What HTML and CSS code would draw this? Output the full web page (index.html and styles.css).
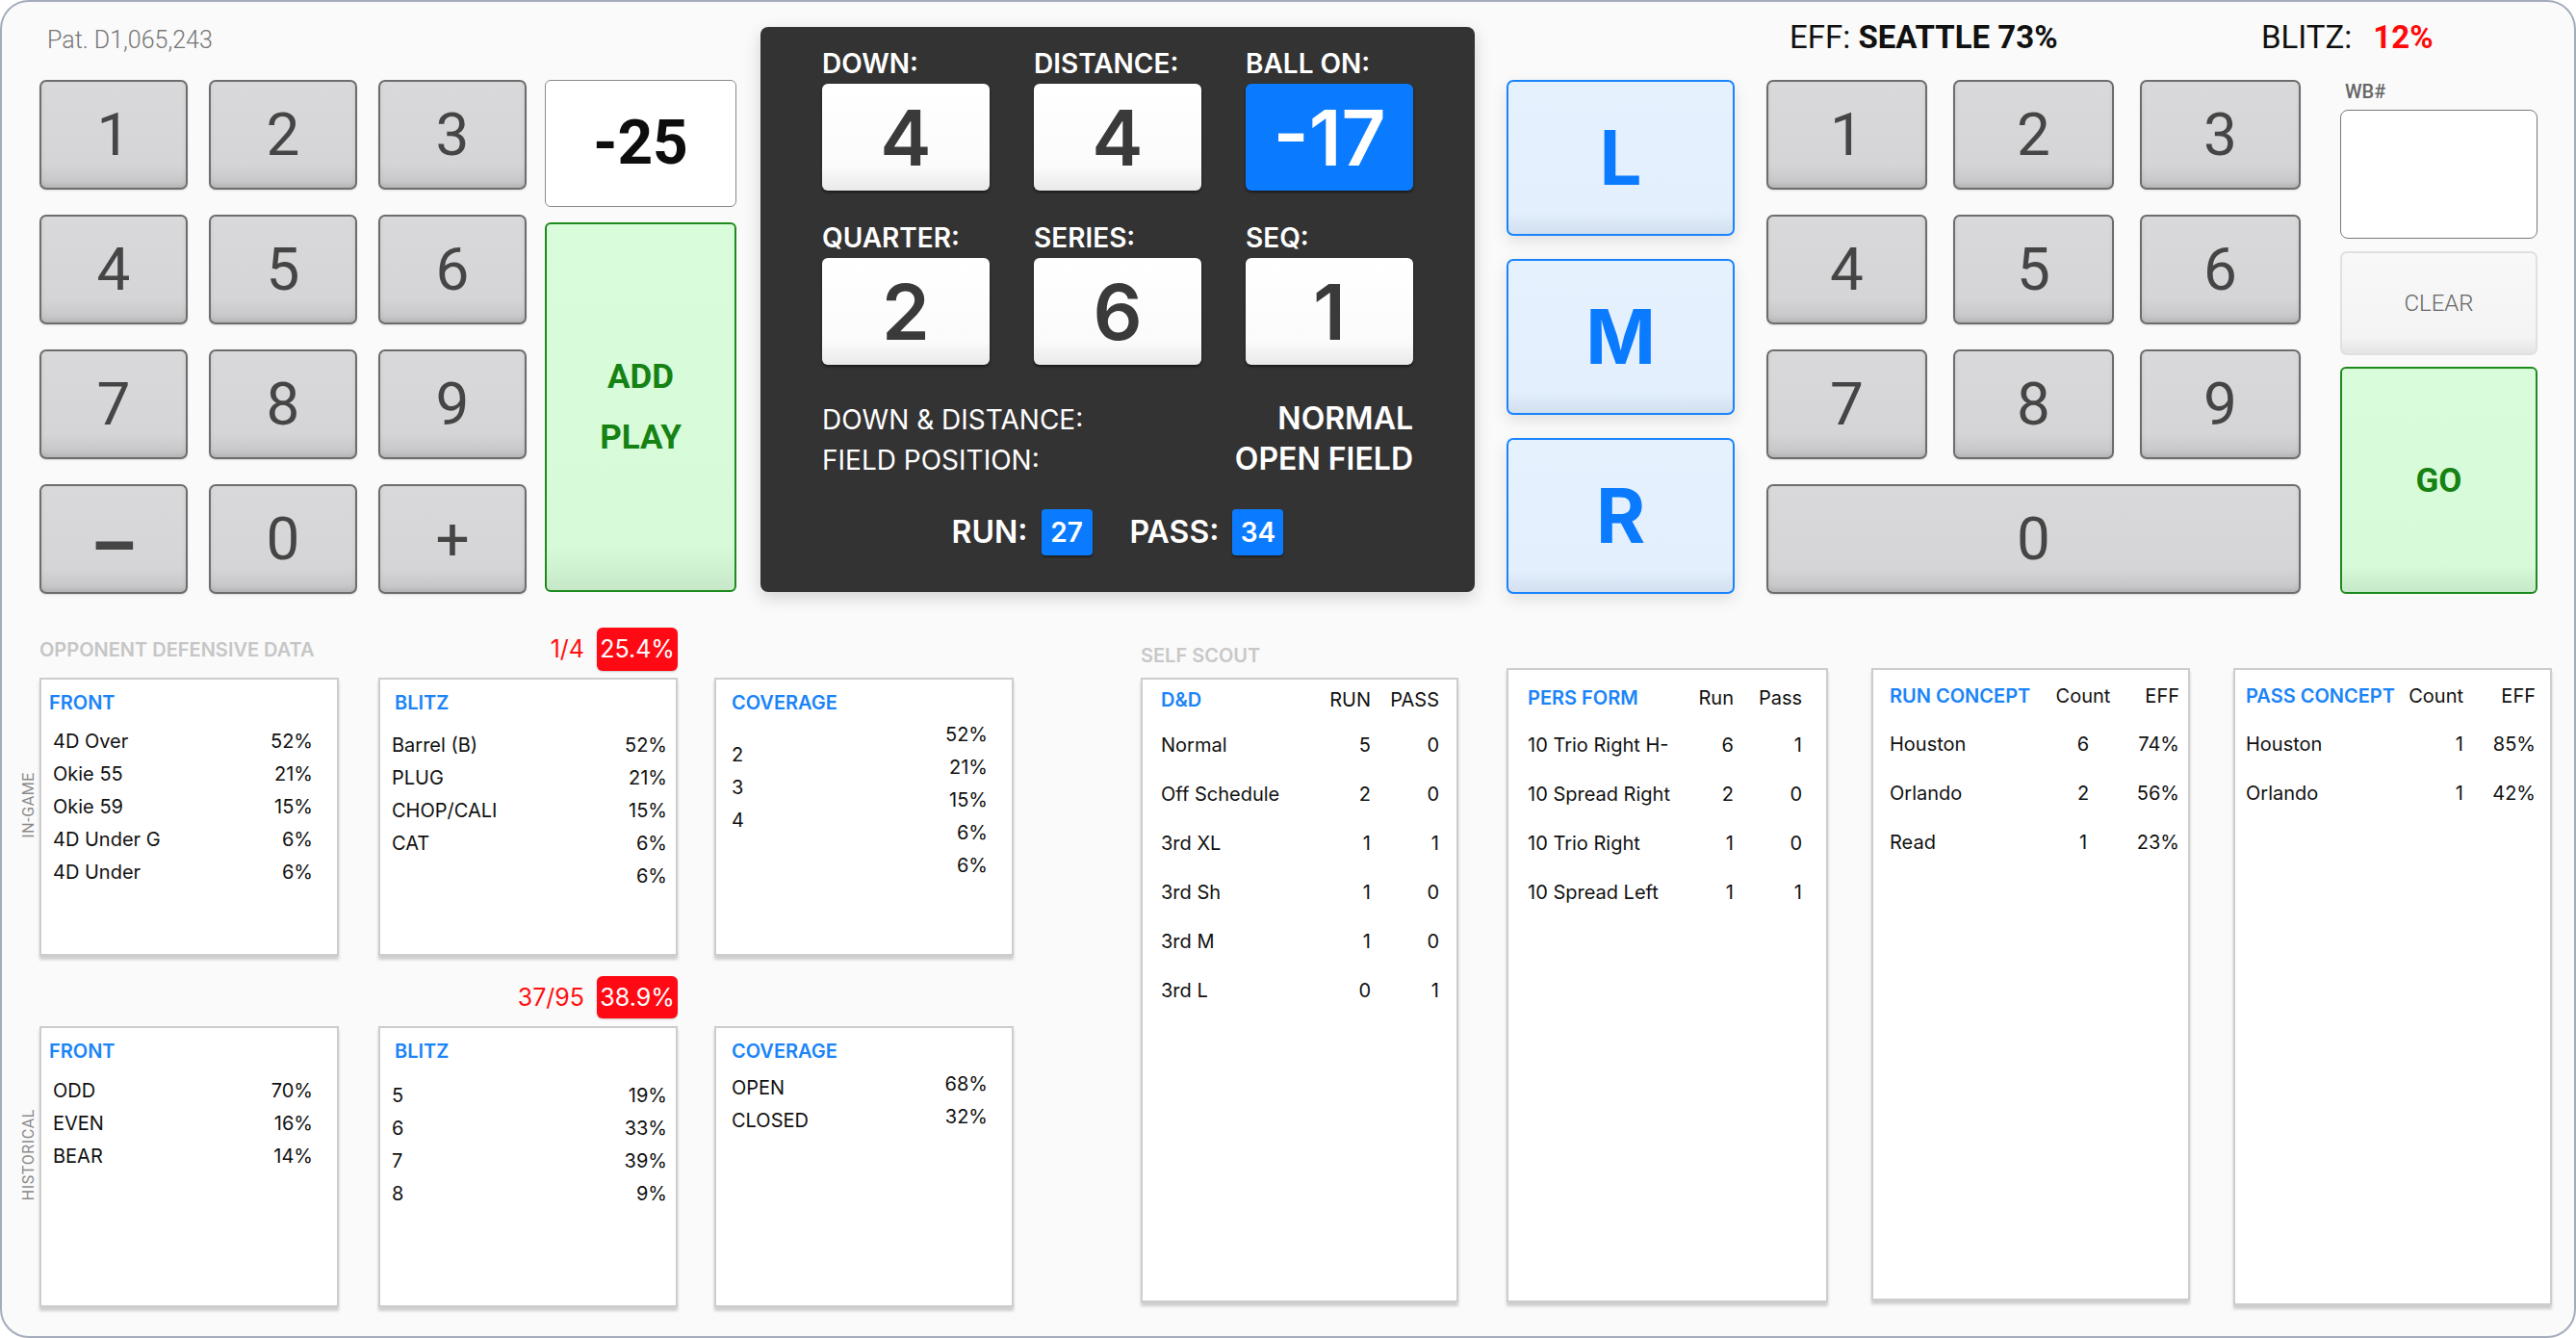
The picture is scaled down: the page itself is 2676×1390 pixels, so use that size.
FILE: index.html
```html
<!DOCTYPE html>
<html>
<head>
<meta charset="utf-8">
<title>Play Caller</title>
<link rel="stylesheet" href="styles.css">
</head>
<body>
<div class="frame">
  <div class="top">
    <div class="left">
      <div class="pat">Pat. D1,065,243</div>
      <div class="left-body">
        <div class="keypad kp-left">
          <div class="key">1</div><div class="key">2</div><div class="key">3</div>
          <div class="key">4</div><div class="key">5</div><div class="key">6</div>
          <div class="key">7</div><div class="key">8</div><div class="key">9</div>
          <div class="key key-minus">–</div><div class="key">0</div><div class="key">+</div>
        </div>
        <div class="entry">
          <div class="entry-val">-25</div>
          <div class="btn-green add">ADD<br>PLAY</div>
        </div>
      </div>
    </div>

    <div class="panel">
      <div class="pgrid">
        <div class="pcell"><div class="plabel">DOWN:</div><div class="pbox">4</div></div>
        <div class="pcell"><div class="plabel">DISTANCE:</div><div class="pbox">4</div></div>
        <div class="pcell"><div class="plabel">BALL ON:</div><div class="pbox blue">-17</div></div>
        <div class="pcell"><div class="plabel">QUARTER:</div><div class="pbox">2</div></div>
        <div class="pcell"><div class="plabel">SERIES:</div><div class="pbox">6</div></div>
        <div class="pcell"><div class="plabel">SEQ:</div><div class="pbox">1</div></div>
      </div>
      <div class="pinfo">
        <div class="prow"><span class="k">DOWN &amp; DISTANCE:</span><span class="v">NORMAL</span></div>
        <div class="prow"><span class="k">FIELD POSITION:</span><span class="v">OPEN FIELD</span></div>
      </div>
      <div class="prun">
        <span class="lab">RUN:</span><span class="pchip">27</span>
        <span class="lab lab2">PASS:</span><span class="pchip">34</span>
      </div>
    </div>

    <div class="right">
      <div class="rhead">
        <span class="eff">EFF: <b>SEATTLE 73%</b></span>
        <span class="blitz">BLITZ:<span class="red">12%</span></span>
      </div>
      <div class="rbody">
        <div class="lmr">
          <div class="lmr-btn">L</div>
          <div class="lmr-btn">M</div>
          <div class="lmr-btn">R</div>
        </div>
        <div class="keypad kp-right">
          <div class="key">1</div><div class="key">2</div><div class="key">3</div>
          <div class="key">4</div><div class="key">5</div><div class="key">6</div>
          <div class="key">7</div><div class="key">8</div><div class="key">9</div>
          <div class="key key-wide">0</div>
        </div>
        <div class="side">
          <div class="wb-label">WB#</div>
          <div class="wb-input"></div>
          <div class="clear">CLEAR</div>
          <div class="btn-green go">GO</div>
        </div>
      </div>
    </div>
  </div>

  <div class="bottom">
    <div class="opp">
      <div class="opp-head">
        <span class="opp-title">OPPONENT DEFENSIVE DATA</span>
        <span class="ratio"><span class="frac">1/4</span><span class="badge">25.4%</span></span>
      </div>
      <div class="opp-row row1">
        <div class="gut"><span class="vlabel">IN-GAME</span></div>
        <div class="card front">
          <div class="chead">FRONT</div>
          <div class="cbody">
            <div class="cl o13">4D Over<br>Okie 55<br>Okie 59<br>4D Under G<br>4D Under</div>
            <div class="cr o13">52%<br>21%<br>15%<br>6%<br>6%</div>
          </div>
        </div>
        <div class="card blitz-card c2">
          <div class="chead">BLITZ</div>
          <div class="cbody">
            <div class="cl o17">Barrel (B)<br>PLUG<br>CHOP/CALI<br>CAT</div>
            <div class="cr o17">52%<br>21%<br>15%<br>6%<br>6%</div>
          </div>
        </div>
        <div class="card cov c3">
          <div class="chead">COVERAGE</div>
          <div class="cbody">
            <div class="cl o27">2<br>3<br>4</div>
            <div class="cr o6">52%<br>21%<br>15%<br>6%<br>6%</div>
          </div>
        </div>
      </div>
      <div class="opp-head head2">
        <span class="opp-title"></span>
        <span class="ratio"><span class="frac">37/95</span><span class="badge b2">38.9%</span></span>
      </div>
      <div class="opp-row row2">
        <div class="gut"><span class="vlabel">HISTORICAL</span></div>
        <div class="card front">
          <div class="chead">FRONT</div>
          <div class="cbody">
            <div class="cl o14">ODD<br>EVEN<br>BEAR</div>
            <div class="cr o14">70%<br>16%<br>14%</div>
          </div>
        </div>
        <div class="card blitz-card c2">
          <div class="chead">BLITZ</div>
          <div class="cbody">
            <div class="cl o19">5<br>6<br>7<br>8</div>
            <div class="cr o19">19%<br>33%<br>39%<br>9%</div>
          </div>
        </div>
        <div class="card cov c3">
          <div class="chead">COVERAGE</div>
          <div class="cbody">
            <div class="cl o11">OPEN<br>CLOSED</div>
            <div class="cr o7">68%<br>32%</div>
          </div>
        </div>
      </div>
    </div>

    <div class="self">
      <div class="dd-col">
        <div class="self-title">SELF SCOUT</div>
        <div class="scard dd">
          <div class="stab">
            <div class="th blue">D&amp;D</div><div class="th r">RUN</div><div class="th r">PASS</div>
            <div>Normal</div><div class="r">5</div><div class="r">0</div>
            <div>Off Schedule</div><div class="r">2</div><div class="r">0</div>
            <div>3rd XL</div><div class="r">1</div><div class="r">1</div>
            <div>3rd Sh</div><div class="r">1</div><div class="r">0</div>
            <div>3rd M</div><div class="r">1</div><div class="r">0</div>
            <div>3rd L</div><div class="r">0</div><div class="r">1</div>
          </div>
        </div>
      </div>
      <div class="scard pers">
        <div class="stab">
          <div class="th blue">PERS FORM</div><div class="th r">Run</div><div class="th r">Pass</div>
          <div>10 Trio Right H-</div><div class="r">6</div><div class="r">1</div>
          <div>10 Spread Right</div><div class="r">2</div><div class="r">0</div>
          <div>10 Trio Right</div><div class="r">1</div><div class="r">0</div>
          <div>10 Spread Left</div><div class="r">1</div><div class="r">1</div>
        </div>
      </div>
      <div class="scard runc">
        <div class="stab">
          <div class="th blue">RUN CONCEPT</div><div class="th c">Count</div><div class="th r">EFF</div>
          <div>Houston</div><div class="c">6</div><div class="r">74%</div>
          <div>Orlando</div><div class="c">2</div><div class="r">56%</div>
          <div>Read</div><div class="c">1</div><div class="r">23%</div>
        </div>
      </div>
      <div class="scard passc">
        <div class="stab">
          <div class="th blue">PASS CONCEPT</div><div class="th r">Count</div><div class="th r">EFF</div>
          <div>Houston</div><div class="r">1</div><div class="r">85%</div>
          <div>Orlando</div><div class="r">1</div><div class="r">42%</div>
        </div>
      </div>
    </div>
  </div>
</div>
</body>
</html>
```

FILE: styles.css
```css
* { box-sizing: border-box; }
html, body { margin: 0; padding: 0; background: #ffffff; }

.frame {
  width: 2676px;
  height: 1390px;
  border: 2px solid #a4acbc;
  border-radius: 30px;
  background: #fafafa;
  overflow: hidden;
  font-family: Roboto, "Liberation Sans", sans-serif;
}

/* ---------- TOP ---------- */
.top {
  display: flex;
  align-items: flex-start;
  height: 638px;
  padding-left: 39px;
  flex-shrink: 0;
}

.left { width: 724px; display: flex; flex-direction: column; }
.pat {
  height: 81px;
  padding: 27px 0 0 8px;
  font: 300 25px/25px Roboto, sans-serif;
  color: #767676;
}
.left-body { display: flex; }

.keypad {
  display: grid;
  grid-template-rows: repeat(4, 114px);
  row-gap: 26px;
}
.kp-left { grid-template-columns: repeat(3, 154px); column-gap: 22px; }
.kp-right { grid-template-columns: repeat(3, 167px); column-gap: 27px; margin-left: 33px; }

.key {
  background: linear-gradient(#d9d9db, #d5d5d7 78%, #c3c3c5);
  border: 2px solid #6d6d6d;
  border-radius: 7px;
  display: flex;
  align-items: center;
  justify-content: center;
  font: 400 62px/1 Roboto, sans-serif;
  color: #454545;
  box-shadow: inset 0 -3px 4px rgba(0,0,0,0.08), 0 1px 2px rgba(0,0,0,0.12);
}
.key-minus { font-size: 76px; font-weight: 700; padding-top: 14px; }
.key-wide { grid-column: 1 / 4; }

.entry { margin-left: 19px; width: 199px; display: flex; flex-direction: column; gap: 16px; }
.entry-val {
  height: 132px;
  background: #ffffff;
  border: 1.5px solid #8a8a8a;
  border-radius: 6px;
  display: flex;
  align-items: center;
  justify-content: center;
  font: 700 64px/1 Roboto, sans-serif;
  color: #0d0d0d;
}

.btn-green {
  background: linear-gradient(#d9fcdb, #d7fbd9 88%, #c6e8c8);
  border: 2px solid #1d8a1d;
  border-radius: 6px;
  display: flex;
  align-items: center;
  justify-content: center;
  text-align: center;
  font: 700 35px/63px Roboto, sans-serif;
  color: #168214;
}
.add { height: 384px; }

/* ---------- DARK PANEL ---------- */
.panel {
  margin: 26px 0 0 25px;
  width: 742px;
  height: 587px;
  flex-shrink: 0;
  background: #333333;
  border-radius: 8px;
  padding: 24px 64px 0;
  box-shadow: 0 6px 18px rgba(0,0,0,0.16);
  font-family: Inter, "Liberation Sans", sans-serif;
  color: #ffffff;
}
.pgrid {
  display: grid;
  grid-template-columns: repeat(3, 174px);
  column-gap: 46px;
  row-gap: 35px;
}
.plabel { font: 600 28px/28px Inter, sans-serif; margin-bottom: 7px; }
.pbox {
  height: 111px;
  background: linear-gradient(#ffffff, #fbfbfb 78%, #e9e9e9);
  border-radius: 6px;
  display: flex;
  align-items: center;
  justify-content: center;
  font: 600 80px/1 Inter, sans-serif;
  color: #3a3a3a;
  box-shadow: 0 2px 3px rgba(0,0,0,0.5);
}
.pbox.blue { background: #0a7bff; color: #ffffff; }

.pinfo { margin-top: 35px; }
.prow { display: flex; justify-content: space-between; align-items: baseline; height: 42px; }
.prow .k { font: 400 28px/42px Inter, sans-serif; }
.prow .v { font: 600 32px/42px Inter, sans-serif; }

.prun { display: flex; justify-content: center; align-items: center; margin-top: 31px; }
.prun .lab { font: 600 32px/1 Inter, sans-serif; }
.prun .lab2 { margin-left: 39px; }
.pchip {
  width: 53px;
  height: 48px;
  margin-left: 14px;
  background: #0a7bff;
  border-radius: 4px;
  font: 600 28px/48px Inter, sans-serif;
  text-align: center;
  box-shadow: 0 2px 2px rgba(0,0,0,0.4);
}

/* ---------- RIGHT ---------- */
.right { margin-left: 33px; display: flex; flex-direction: column; }
.rhead {
  height: 81px;
  padding: 20px 0 0 294px;
  display: flex;
  font: 400 33px/33px Roboto, sans-serif;
  color: #111111;
  white-space: nowrap;
}
.eff { width: 490px; }
.eff b { font-weight: 700; }
.blitz .red { color: #ff0a0a; font-weight: 700; margin-left: 22px; }

.rbody { display: flex; }
.lmr { width: 237px; display: flex; flex-direction: column; gap: 24px; }
.lmr-btn {
  height: 162px;
  background: linear-gradient(#e6f1fe, #e3effd 86%, #d2dfee);
  border: 2px solid #1a84ff;
  border-radius: 7px;
  display: flex;
  align-items: center;
  justify-content: center;
  font: 700 78px/1 Inter, sans-serif;
  color: #0a7bff;
  box-shadow: 0 6px 16px rgba(0,0,0,0.10);
}

.side { margin-left: 41px; width: 205px; display: flex; flex-direction: column; }
.wb-label { height: 31px; padding: 3px 0 0 5px; font: 500 20px/19px Roboto, sans-serif; color: #666666; }
.wb-input { height: 134px; background: #ffffff; border: 1.5px solid #7a7a7a; border-radius: 8px; }
.clear {
  margin-top: 13px;
  height: 108px;
  background: linear-gradient(#f8f8f8, #f4f4f4 84%, #e4e4e4);
  border: 2px solid #e0e0e0;
  border-radius: 7px;
  display: flex;
  align-items: center;
  justify-content: center;
  font: 300 24px/1 Roboto, sans-serif;
  color: #666666;
}
.go { margin-top: 12px; height: 236px; }

/* ---------- BOTTOM ---------- */
.bottom { display: flex; align-items: flex-start; }
.opp { width: 1052px; flex-shrink: 0; }

.opp-head {
  width: 702px;
  height: 64px;
  padding-top: 12px;
  display: flex;
  justify-content: space-between;
  align-items: flex-start;
}
.opp-head.head2 { height: 73px; padding-top: 21px; }
.opp-title {
  margin-left: 39px;
  margin-top: 13px;
  font: 600 20px/20px Inter, sans-serif;
  color: #c6c6c6;
}
.ratio { display: flex; align-items: center; }
.frac { font: 400 25px/1 Inter, sans-serif; color: #ff1010; margin-right: 13px; }
.badge {
  width: 84px;
  height: 45px;
  background: #ff0a14;
  border-radius: 6px;
  color: #ffffff;
  font: 400 25px/45px Inter, sans-serif;
  text-align: center;
  box-shadow: 0 1px 2px rgba(0,0,0,0.2);
}
.badge.b2 { height: 44px; line-height: 44px; }

.opp-row { display: flex; }
.opp-row.row1 { height: 289px; }
.opp-row.row2 { height: 292px; }
.gut {
  width: 39px;
  display: flex;
  align-items: center;
  justify-content: flex-end;
  padding-right: 3px;
  padding-bottom: 24px;
}
.vlabel {
  writing-mode: vertical-rl;
  transform: rotate(180deg);
  font: 400 16px/16px Roboto, sans-serif;
  letter-spacing: 0.6px;
  color: #8a8a8a;
}

.card {
  width: 311px;
  height: 100%;
  background: #ffffff;
  border: 2px solid #cdcdcd;
  box-shadow: 0 4px 3px rgba(0,0,0,0.18);
  padding-top: 14px;
  font-family: Inter, "Liberation Sans", sans-serif;
}
.card.c2 { margin-left: 41px; }
.card.c3 { margin-left: 38px; }
.chead { font: 600 20px/20px Inter, sans-serif; color: #1a84f8; }
.cbody { display: flex; justify-content: space-between; }
.cl, .cr { font: 400 20px/34px Inter, sans-serif; color: #111111; }
.cr { text-align: right; }

.front .chead { margin-left: 8px; }
.front .cl { margin-left: 12px; }
.front .cr { margin-right: 25px; }
.blitz-card .chead { margin-left: 15px; }
.blitz-card .cl { margin-left: 12px; }
.blitz-card .cr { margin-right: 9px; }
.cov .chead { margin-left: 16px; }
.cov .cl { margin-left: 16px; }
.cov .cr { margin-right: 25px; }

.o6 { padding-top: 6px; }
.o7 { padding-top: 7px; }
.o11 { padding-top: 11px; }
.o13 { padding-top: 13px; }
.o14 { padding-top: 14px; }
.o17 { padding-top: 17px; }
.o19 { padding-top: 19px; }
.o27 { padding-top: 27px; }

/* self scout */
.self { display: flex; align-items: flex-start; margin-left: 131px; }
.dd-col { width: 330px; display: flex; flex-direction: column; }
.self-title {
  height: 64px;
  padding-top: 31px;
  font: 600 20px/20px Inter, sans-serif;
  color: #c8c8c8;
}
.scard {
  background: #ffffff;
  border: 2px solid #cdcdcd;
  box-shadow: 0 4px 3px rgba(0,0,0,0.18);
  font-family: Inter, "Liberation Sans", sans-serif;
  color: #111111;
}
.stab { display: grid; font: 400 20px/51px Inter, sans-serif; white-space: nowrap; }
.stab .th { line-height: 20px; margin-bottom: 12px; }
.stab .blue { color: #1a84f8; font-weight: 600; }
.stab .r { text-align: right; }
.stab .c { text-align: center; }

.dd { height: 649px; padding: 11px 18px 0 19px; }
.dd .stab { grid-template-columns: minmax(0, 1fr) 80px 71px; }

.pers { width: 334px; height: 659px; margin: 54px 0 0 50px; padding: 19px 25px 0 20px; }
.pers .stab { grid-template-columns: minmax(0, 1fr) 80px 71px; }
.pers .stab .th { margin-bottom: 14px; }

.runc { width: 331px; height: 657px; margin: 54px 0 0 45px; padding: 17px 9px 0 17px; }
.runc .stab { grid-template-columns: minmax(0, 1fr) 60px 70px; }
.runc .stab .th { margin-bottom: 15px; }

.passc { width: 331px; height: 662px; margin: 54px 0 0 45px; padding: 17px 15px 0 11px; }
.passc .stab { grid-template-columns: minmax(0, 1fr) 80px 75px; }
.passc .stab .th { margin-bottom: 15px; }
```
